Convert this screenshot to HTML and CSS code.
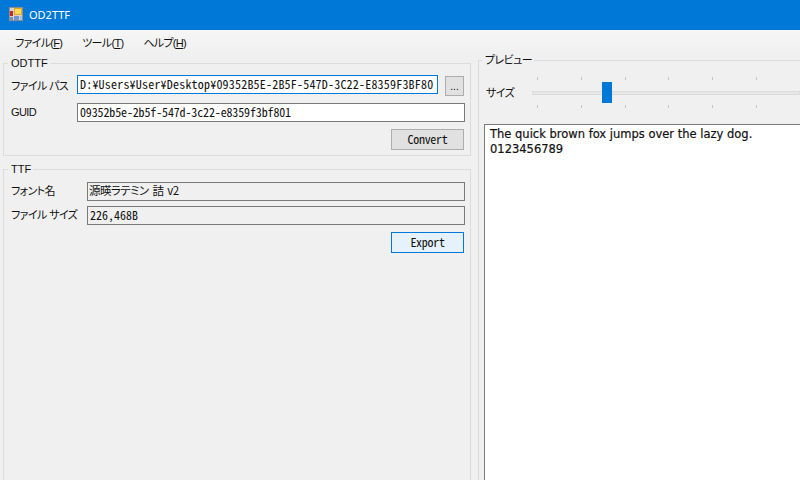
FILE: index.html
```html
<!DOCTYPE html>
<html lang="ja">
<head>
<meta charset="utf-8">
<title>OD2TTF</title>
<link rel="stylesheet" href="styles.css">
</head>
<body>
<div class="window">
  <header class="titlebar">
    <svg class="appicon" width="14" height="14" viewBox="0 0 14 14">
      <rect x="0.5" y="0.5" width="13" height="13" fill="#d8d4cc" stroke="#8d8d8d"/>
      <rect x="5" y="1" width="8" height="7" fill="#e0a820"/>
      <rect x="6" y="2" width="6" height="5" fill="#fbd95a"/>
      <rect x="1" y="4" width="3" height="5" fill="#c8281e"/>
      <rect x="5" y="9" width="5" height="4" fill="#6f94d8"/>
      <rect x="11" y="9" width="2" height="4" fill="#a9bde0"/>
      <rect x="1" y="10" width="3" height="3" fill="#7f8fa8"/>
    </svg>
    <span class="titletext">OD2TTF</span>
  </header>
  <nav class="menubar">
    <span class="menuitem">ファイル(<u>F</u>)</span>
    <span class="menuitem">ツール(<u>T</u>)</span>
    <span class="menuitem">ヘルプ(<u>H</u>)</span>
  </nav>
  <main class="content">
    <div class="leftcol">
      <fieldset class="group group-odttf">
        <legend>ODTTF</legend>
        <div class="row">
          <label class="lbl lbl-a lbl-path">ファイル パス</label>
          <div class="field field-focus path">D:¥Users¥User¥Desktop¥09352B5E-2B5F-547D-3C22-E8359F3BF80</div>
          <button class="btn btn-small">...</button>
        </div>
        <div class="row row-guid">
          <label class="lbl lbl-a">GUID</label>
          <div class="field grow guid">09352b5e-2b5f-547d-3c22-e8359f3bf801</div>
        </div>
        <div class="actions">
          <button class="btn">Convert</button>
        </div>
      </fieldset>
      <fieldset class="group group-ttf">
        <legend>TTF</legend>
        <div class="row">
          <label class="lbl lbl-b">フォント名</label>
          <div class="field readonly grow fontname">源暎ラテミン 詰 v2</div>
        </div>
        <div class="row row-size">
          <label class="lbl lbl-b">ファイル サイズ</label>
          <div class="field readonly grow">226,468B</div>
        </div>
        <div class="actions">
          <button class="btn btn-active">Export</button>
        </div>
      </fieldset>
    </div>
    <div class="rightcol">
      <fieldset class="group group-preview">
        <legend>プレビュー</legend>
        <div class="sizerow">
          <label class="lbl lbl-size">サイズ</label>
          <div class="slider">
            <div class="ticks"><i></i><i></i><i></i><i></i><i></i><i></i></div>
            <div class="track"></div>
            <div class="ticks"><i></i><i></i><i></i><i></i><i></i><i></i></div>
            <div class="thumb"></div>
          </div>
        </div>
        <div class="previewbox">The quick brown fox jumps over the lazy dog.<br>0123456789</div>
      </fieldset>
    </div>
  </main>
</div>
</body>
</html>
```
FILE: styles.css
```css
* { box-sizing: border-box; }
html, body { margin: 0; padding: 0; }
body {
  width: 800px;
  height: 480px;
  overflow: hidden;
  background: #f0f0f0;
  color: #000;
  font-family: "Liberation Sans", "Noto Sans CJK JP", sans-serif;
  font-size: 12px;
  font-feature-settings: "palt";
}
.window { width: 800px; height: 480px; display: flex; flex-direction: column; overflow: hidden; }
.titlebar {
  height: 30px; flex: none; background: #0078d7; color: #fff;
  display: flex; align-items: center; padding-left: 9px; gap: 6px;
}
.titletext { font-family: "Noto Sans", sans-serif; font-size: 11px; line-height: 30px; }
.appicon { display: block; margin-top: -2px; }
.menubar {
  height: 24px; flex: none; display: flex; align-items: center; padding-left: 15px;
  background: linear-gradient(#f6f6f6, #f0f0f0); gap: 20px;
  font-size: 11px; color: #111; letter-spacing: -0.7px;
}
.content { flex: 1; display: flex; min-height: 0; padding-left: 3px; }
.leftcol { width: 468px; flex: none; display: flex; flex-direction: column; margin-top: 2px; }
.rightcol { flex: none; width: 322px; margin-left: 7px; margin-top: -1px; }
.group { margin: 0; padding: 0; border: 1px solid #dcdcdc; min-width: 0; display: block; }
.group legend { margin-left: -3px; padding: 0 2px 0 3px; font-size: 11px; line-height: 14px; height: 14px; color: #111; }
.group-odttf { height: 100px; flex: none; padding: 5px 5px 0 7px; }
.group-ttf { height: 330px; flex: none; margin-top: 6px; padding: 6px 5px 0 7px; }
.row { display: flex; align-items: flex-start; }
.row-guid { margin-top: 7px; }
.row-size { margin-top: 5px; }
.lbl { flex: none; font-size: 11px; line-height: 19px; white-space: nowrap; color: #111; letter-spacing: -0.6px; }
.lbl-a { width: 66px; }
.lbl-b { width: 76px; }
.lbl-path { padding-top: 2px; }
.field {
  height: 19px; background: #fff; border: 1px solid #7a7a7a; padding-left: 2px;
  font-family: "Noto Sans CJK JP", sans-serif; font-feature-settings: "hwid"; font-size: 12px; line-height: 15px;
  white-space: nowrap; overflow: hidden; color: #111;
}
.grow { flex: 1; min-width: 0; }
.path { width: 361px; flex: none; letter-spacing: 0.2px; }
.guid { letter-spacing: -0.14px; }
.fontname { font-feature-settings: "palt"; letter-spacing: -0.6px; word-spacing: 2px; font-size: 11.5px; padding-left: 1px; }
.field-focus { border-color: #0078d7; }
.readonly { background: #f0f0f0; }
.btn {
  width: 73px; height: 21px; padding: 0 0 3px; background: #e1e1e1; border: 1px solid #adadad;
  font-family: "Noto Sans CJK JP", sans-serif; font-feature-settings: "hwid"; font-size: 12px; line-height: 15px; color: #111; display: block; letter-spacing: -0.3px;
}
.btn-small { width: 19px; height: 20px; margin: 1px 0 0 7px; padding: 0; font-family: "Liberation Sans", sans-serif; font-feature-settings: normal; font-size: 10px; letter-spacing: 0; }
.btn-active { background: #e5f1fb; border-color: #0078d7; }
.actions { display: flex; justify-content: flex-end; margin-top: 7px; padding-right: 1px; }
.group-preview { height: 440px; padding: 0 0 0 5px; border-right: 0; }
.group-preview legend { margin-left: -2px; letter-spacing: -0.6px; }
.sizerow { display: flex; align-items: flex-start; height: 31px; margin-top: 10px; padding-left: 2px; }
.lbl-size { width: 46px; padding-top: 7px; }
.slider { position: relative; flex: 1; height: 31px; display: flex; flex-direction: column; justify-content: space-between; }
.ticks { display: flex; gap: 42.8px; padding-left: 5px; height: 3px; }
.ticks i { display: block; width: 1px; height: 3px; background: #c4c4c4; flex: none; }
.track { height: 4px; background: #e7e7e7; border: 1px solid #dcdcdc; }
.thumb { position: absolute; left: 70px; top: 5px; width: 10px; height: 21px; background: #0078d7; }
.previewbox {
  margin-top: 16px; height: 370px; background: #fff; border: 1px solid #7a7a7a; border-right: 0; border-bottom: 0;
  padding: 2px 0 0 5px; font-family: "DejaVu Sans", sans-serif; font-feature-settings: normal; font-size: 11.5px; line-height: 15px; color: #111;
  -webkit-text-stroke: 0.2px #111;
}
```
